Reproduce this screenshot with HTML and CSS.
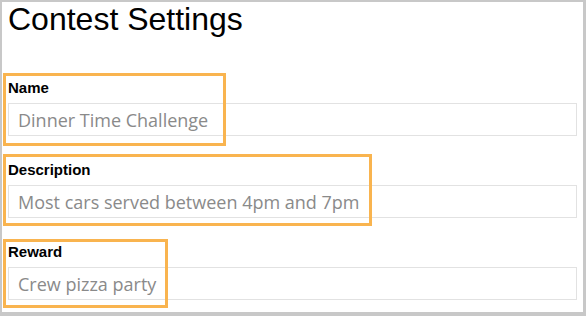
FILE: index.html
```html
<!DOCTYPE html>
<html lang="en">
<head>
<meta charset="utf-8">
<title>Contest Settings</title>
<link rel="stylesheet" href="styles.css">
</head>
<body>
<div class="frame">
  <h1 class="title">Contest Settings</h1>
  <div class="fields">
    <div class="field">
      <label class="label" for="name">Name</label>
      <input class="input" id="name" type="text" value="Dinner Time Challenge">
      <span class="highlight hl-name"></span>
    </div>
    <div class="field">
      <label class="label" for="desc">Description</label>
      <input class="input" id="desc" type="text" value="Most cars served between 4pm and 7pm">
      <span class="highlight hl-desc"></span>
    </div>
    <div class="field">
      <label class="label" for="reward">Reward</label>
      <input class="input" id="reward" type="text" value="Crew pizza party">
      <span class="highlight hl-reward"></span>
    </div>
  </div>
</div>
</body>
</html>
```

FILE: styles.css
```css
html, body {
  margin: 0;
  padding: 0;
  background: #ffffff;
}

.frame {
  box-sizing: border-box;
  width: 586px;
  height: 316px;
  border-style: solid;
  border-color: #c8c8c8;
  border-width: 2px 3px 4px 2px;
  padding: 0 6px;
  background: #ffffff;
  overflow: hidden;
}

.title {
  margin: 0;
  font-family: "Liberation Sans", Arial, sans-serif;
  font-weight: normal;
  font-size: 32px;
  line-height: 34px;
  color: #000000;
}

.fields {
  display: flex;
  flex-direction: column;
  gap: 25px;
  margin-top: 43px;
}

.field {
  position: relative;
  display: flex;
  flex-direction: column;
  gap: 6px;
}

.label {
  font-family: "Liberation Sans", Arial, sans-serif;
  font-weight: bold;
  font-size: 15px;
  line-height: 18px;
  color: #000000;
}

.input {
  box-sizing: border-box;
  width: 100%;
  height: 33px;
  margin: 0;
  padding: 0 9px;
  border: 1px solid #e2e2e2;
  border-radius: 0;
  background: #ffffff;
  font-family: "Open Sans", sans-serif;
  font-size: 18px;
  color: #8a8a8a;
  outline: none;
}

.highlight {
  position: absolute;
  box-sizing: border-box;
  border: 3px solid #f9b44f;
  pointer-events: none;
}

.hl-name {
  left: -5px;
  top: -6px;
  width: 223px;
  height: 73px;
}

.hl-desc {
  left: -5px;
  top: -7px;
  width: 369px;
  height: 72px;
}

.hl-reward {
  left: -5px;
  top: -4px;
  width: 165px;
  height: 69px;
}
```
